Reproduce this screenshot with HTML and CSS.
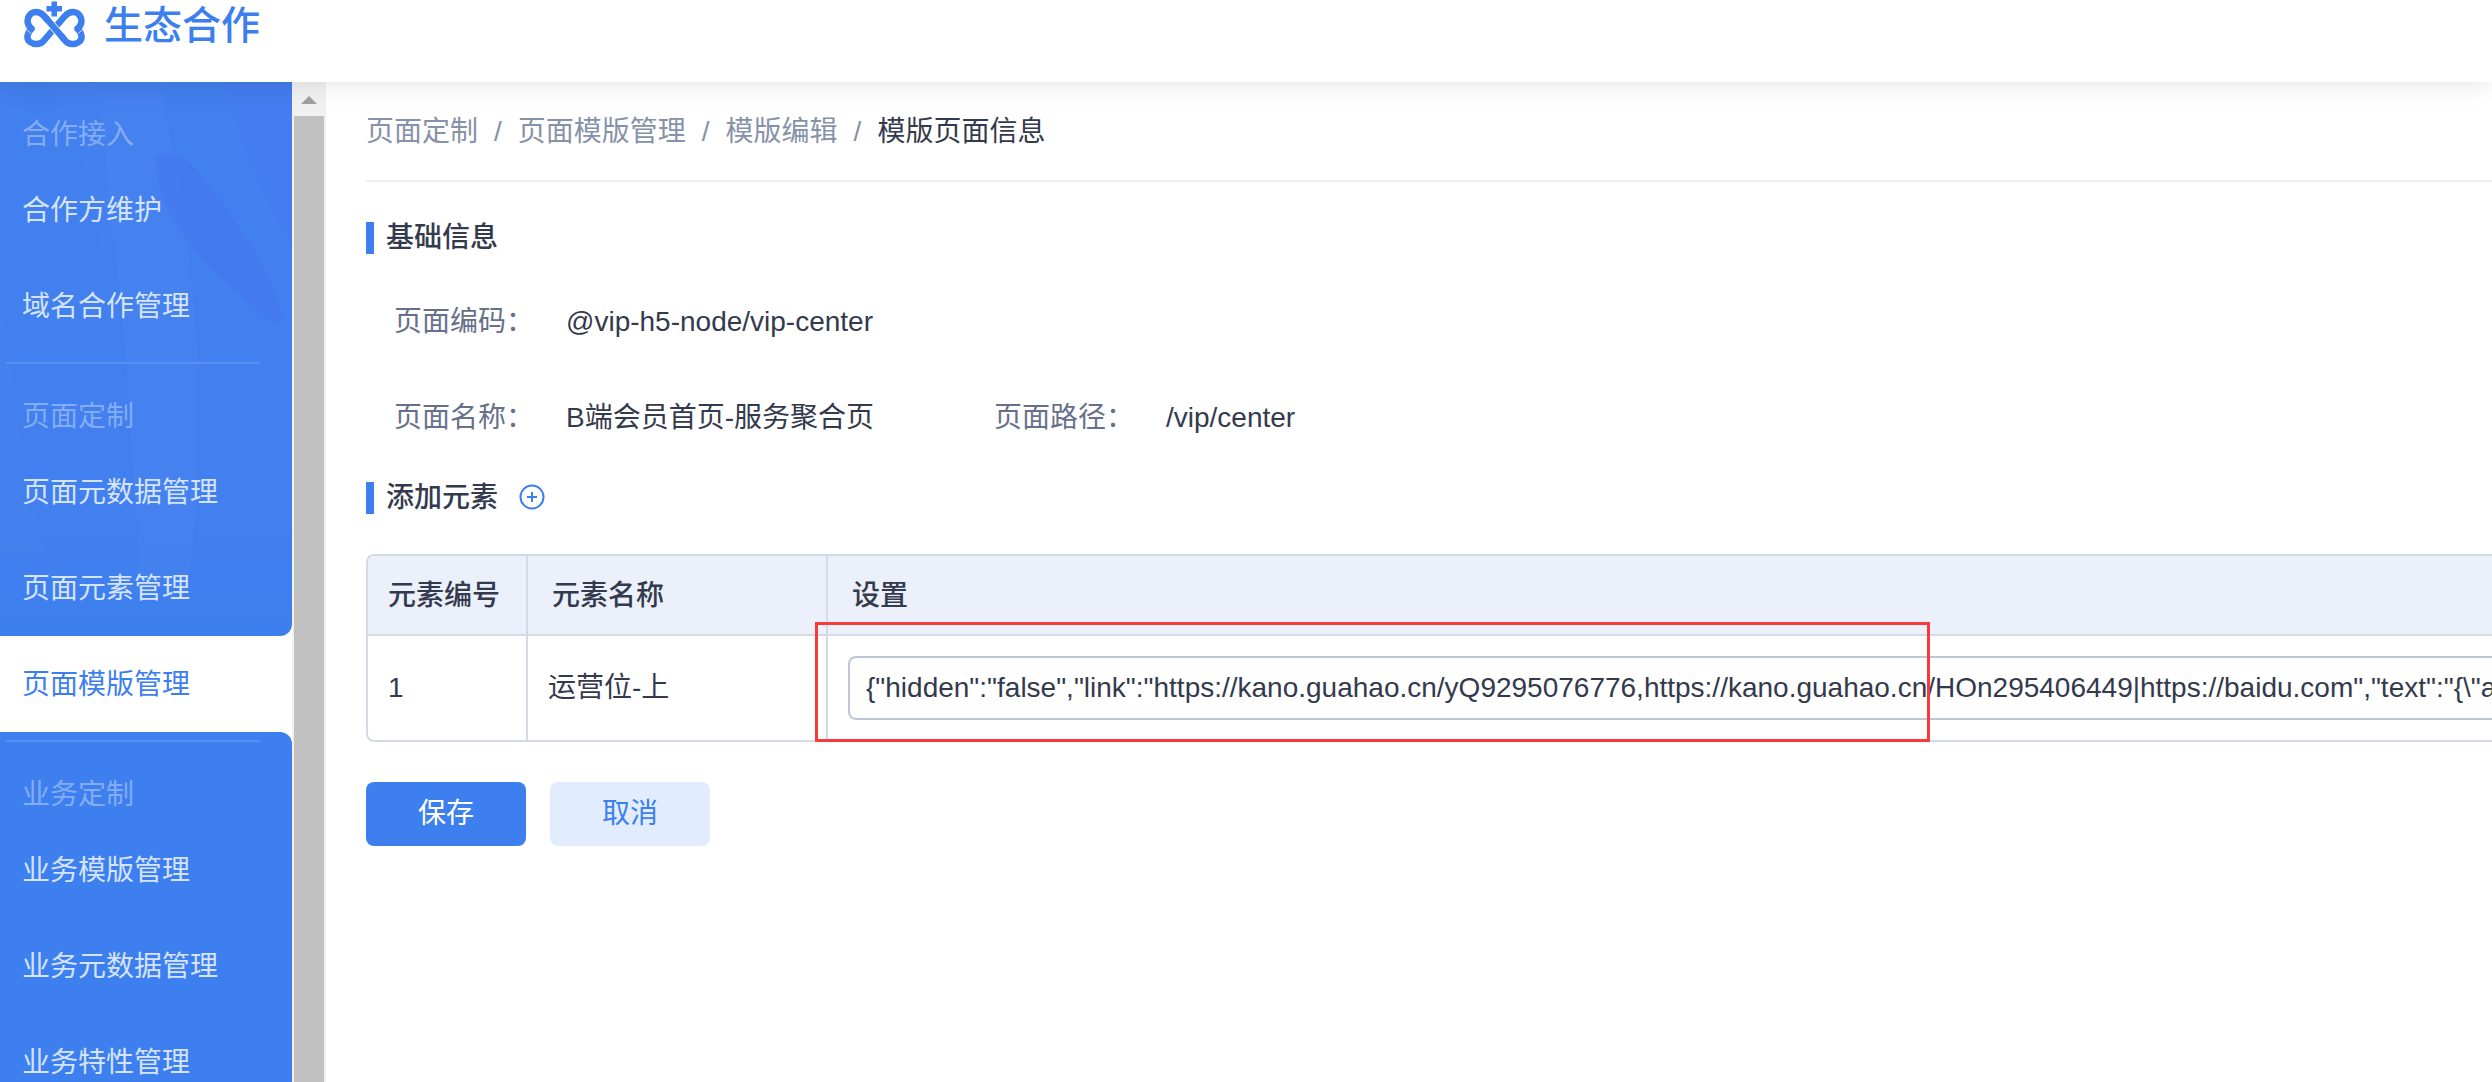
FILE: index.html
```html
<!DOCTYPE html>
<html lang="zh-CN">
<head>
<meta charset="utf-8">
<title>生态合作</title>
<link rel="stylesheet" href="styles.css">
</head>
<body>
<header class="header">
  <svg class="logo" viewBox="0 0 62 48" aria-hidden="true">
    <g fill="none" stroke="#3d7fee" stroke-width="6.5">
      <path d="M30.500 28 20 16C15 10.500 8 11 5 16 2 21 4 27 9.500 30.500"/>
      <path d="M9 27.500C2.500 32.500 2 39 6 42 10 45 16 44.500 19 41.500L41 16C46 10.500 53 11 56 16 59 21 57 27 51.500 30.500"/>
      <path d="M52 27.500C58.500 32.500 59 39 55 42 51 45 45 44.500 42 41.500L30.500 28"/>
      <path d="M24 20.500 37 35.700" stroke="#fff" stroke-width="8"/>
      <path d="M21 17 40 39.200"/>
    </g>
    <path d="M1 28.500 7 33.500M60 28.500 54 33.500" stroke="#c3d8fb" stroke-width="1"/>
    <path d="M27.500 1.500h5.500v4.500h5v5.500h-5v5h-5.500v-5h-5V6h5z" fill="#3d7fee"/>
  </svg>
  <span class="brand">生态合作</span>
</header>
<div class="layout">
  <nav class="sidebar">
    <div class="menu menu-top">
      <svg class="pattern" viewBox="0 0 292 554" preserveAspectRatio="none" aria-hidden="true">
        <path d="M50 0C75 40 95 100 108 200 120 140 115 50 95 0z" fill="#fff" fill-opacity=".015"/>
        <path d="M112 150C130 260 130 400 142 500H188C210 350 200 200 160 0H100z" fill="#fff" fill-opacity=".02"/>
        <path d="M156 74C170 68 182 72 196 88 240 140 270 190 284 238 278 246 260 232 240 212 200 180 154 130 156 74z" fill="#4478ee" fill-opacity=".6"/>
        <path d="M225 0C250 80 270 130 292 160V0z" fill="#4a7cf0" fill-opacity=".3"/>
        <path d="M0 230C15 310 20 400 45 470H0z" fill="#fff" fill-opacity=".015"/>
      </svg>
      <h2 class="group">合作接入</h2>
      <a class="item" href="#">合作方维护</a>
      <a class="item" href="#">域名合作管理</a>
      <hr class="rule">
      <h2 class="group">页面定制</h2>
      <a class="item" href="#">页面元数据管理</a>
      <a class="item" href="#">页面元素管理</a>
    </div>
    <a class="item active" href="#" aria-current="page">页面模版管理</a>
    <div class="menu menu-bottom">
      <hr class="rule">
      <h2 class="group">业务定制</h2>
      <a class="item" href="#">业务模版管理</a>
      <a class="item" href="#">业务元数据管理</a>
      <a class="item" href="#">业务特性管理</a>
    </div>
  </nav>
  <div class="scrollbar" aria-hidden="true">
    <svg class="arrow" viewBox="0 0 16 8"><path d="M0 8 8 0l8 8z" fill="#a0a0a0"/></svg>
    <div class="thumb"></div>
  </div>
  <main class="main">
    <nav class="crumbs">
      <a href="#">页面定制</a><span>/</span><a href="#">页面模版管理</a><span>/</span><a href="#">模版编辑</a><span>/</span><strong>模版页面信息</strong>
    </nav>
    <h2 class="section">基础信息</h2>
    <dl class="info">
      <div class="field wide"><dt>页面编码：</dt><dd>@vip-h5-node/vip-center</dd></div>
      <div class="field"><dt>页面名称：</dt><dd>B端会员首页-服务聚合页</dd></div>
      <div class="field"><dt>页面路径：</dt><dd>/vip/center</dd></div>
    </dl>
    <h2 class="section">添加元素
      <button class="add" type="button" aria-label="添加元素">
        <svg viewBox="0 0 26 26"><circle cx="13" cy="13" r="11.5"/><path d="M13 8v10M8 13h10"/></svg>
      </button>
    </h2>
    <div class="table-box">
      <table class="table">
        <colgroup><col class="col-id"><col class="col-name"><col></colgroup>
        <thead><tr><th>元素编号</th><th>元素名称</th><th>设置</th></tr></thead>
        <tbody><tr>
          <td>1</td>
          <td>运营位-上</td>
          <td><input class="input" type="text" aria-label="设置" value="{&quot;hidden&quot;:&quot;false&quot;,&quot;link&quot;:&quot;https://kano.guahao.cn/yQ9295076776,https://kano.guahao.cn/HOn295406449|https://baidu.com&quot;,&quot;text&quot;:&quot;{\&quot;a"></td>
        </tr></tbody>
      </table>
      <div class="highlight"></div>
    </div>
    <div class="actions">
      <button class="btn primary" type="button">保存</button>
      <button class="btn" type="button">取消</button>
    </div>
  </main>
</div>
</body>
</html>
```
FILE: styles.css
```css
* { box-sizing: border-box; }

body {
  margin: 0;
  height: 100vh;
  display: flex;
  flex-direction: column;
  overflow: hidden;
  background: #fff;
  color: #333a4d;
  font: 28px/40px "Liberation Sans", "Noto Sans CJK SC", sans-serif;
}

h2, dl, dd { margin: 0; font-weight: 400; font-size: 28px; }
a { color: inherit; text-decoration: none; }
button, input { font: inherit; }

.header {
  position: relative;
  z-index: 1;
  flex: none;
  height: 82px;
  padding: 0 24px;
  display: flex;
  align-items: flex-start;
  gap: 18px;
  background: #fff;
  box-shadow: 0 0 28px rgba(0, 0, 0, .12);
}
.logo { width: 62px; height: 48px; }
.brand { color: #3d7fee; font-size: 39px; line-height: 52px; font-weight: 500; }

.layout { flex: 1; min-height: 0; display: flex; }

.sidebar { flex: none; width: 292px; overflow: hidden; }
.menu { position: relative; background: #3d7fee; }
.menu-top {
  border-bottom-right-radius: 12px;
  background: linear-gradient(#427fef 80%, #3d7fee);
}
.menu-bottom { padding-top: 8px; border-top-right-radius: 12px; }
.pattern { position: absolute; inset: 0; width: 100%; height: 100%; }
.group {
  position: relative;
  height: 80px;
  padding: 33px 22px 7px;
  color: #84acf4;
}
.item {
  position: relative;
  display: block;
  padding: 29px 22px 27px;
  color: #d5e4fe;
}
.active { color: #3d7fee; }
.rule {
  position: relative;
  width: 254px;
  height: 2px;
  margin: 0 6px;
  border: 0;
  background: #5890f2;
}
.menu-top .rule { margin-top: 8px; }

.scrollbar {
  flex: none;
  width: 34px;
  padding: 14px 2px 0;
  display: flex;
  flex-direction: column;
  align-items: center;
  gap: 12px;
  background: #f1f1f1;
}
.arrow { flex: none; width: 16px; height: 8px; }
.thumb { flex: 1; width: 30px; background: #c1c1c1; }

.main { flex: 1; min-width: 0; padding-left: 40px; }

.crumbs {
  height: 100px;
  padding-top: 30px;
  display: flex;
  gap: 16px;
  border-bottom: 2px solid #ebeef7;
  color: #8592a8;
}
.crumbs strong { color: #333a4d; font-weight: 400; }

.section {
  display: flex;
  align-items: center;
  margin-top: 36px;
  font-weight: 500;
}
.section::before {
  content: "";
  width: 8px;
  height: 32px;
  margin-right: 12px;
  background: #3d7fee;
}
.add {
  display: flex;
  margin-left: 21px;
  padding: 0 0 2px;
  border: 0;
  background: none;
}
.add svg { width: 26px; height: 26px; fill: none; stroke: #3d7fee; stroke-width: 2; }

.info {
  display: grid;
  grid-template-columns: 600px 600px;
  row-gap: 56px;
  padding: 44px 0 0 28px;
}
.field { display: flex; }
.wide { grid-column: 1 / -1; }
.field dt { width: 172px; color: #66708a; }
.info + .section { margin-top: 40px; }

.table-box { position: relative; margin-top: 36px; }
.table {
  width: 100%;
  table-layout: fixed;
  border-collapse: separate;
  border-spacing: 0;
  border: 2px solid #d5dae6;
  border-right: 0;
  border-radius: 8px 0 0 8px;
  overflow: hidden;
}
.col-id { width: 158px; }
.col-name { width: 300px; }
.table th {
  height: 80px;
  padding: 2px 24px 0;
  background: #ecf0fb;
  border-bottom: 2px solid #d5dae6;
  text-align: left;
  font-weight: 500;
}
.table th:first-child, .table td:first-child { padding-left: 20px; }
.table td { height: 104px; padding: 0 20px; }
.table th + th, .table td + td { border-left: 2px solid #d5dae6; }
.table td:last-child { padding-right: 0; }
.input {
  display: block;
  width: 100%;
  height: 64px;
  padding: 0 0 0 16px;
  border: 2px solid #c0c6d6;
  border-right: 0;
  border-radius: 8px 0 0 8px;
  outline: 0;
  background: #fff;
  color: #333a4d;
}
.highlight {
  position: absolute;
  top: 68px;
  bottom: 0;
  left: 449px;
  width: 1115px;
  border: 3px solid #fa3a3a;
  pointer-events: none;
}

.actions { display: flex; gap: 24px; margin-top: 40px; }
.btn {
  width: 160px;
  height: 64px;
  padding: 0;
  border: 0;
  border-radius: 8px;
  background: #e1edff;
  color: #3d7fee;
}
.primary { background: #3d7fee; color: #fff; }
```
